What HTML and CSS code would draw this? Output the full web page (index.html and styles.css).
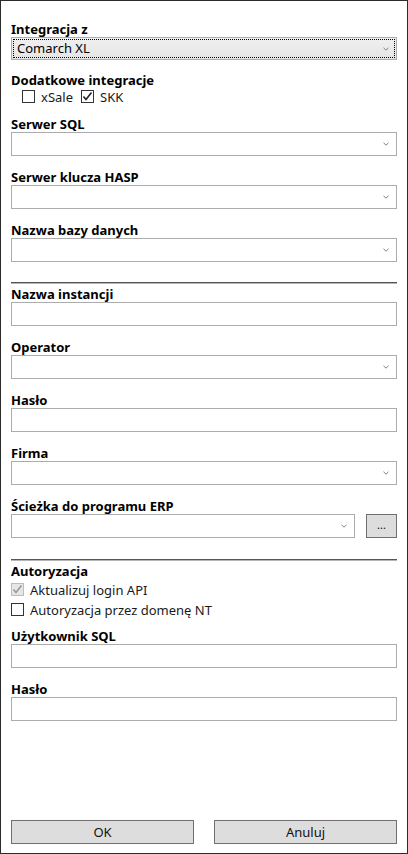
FILE: index.html
```html
<!DOCTYPE html>
<html lang="pl">
<head>
  <meta charset="UTF-8" />
  <meta name="viewport" content="width=device-width, initial-scale=1.0"/>
  <title>Integracja ERP</title>
  <link rel="stylesheet" href="styles.css">
</head>
<body>
  <div class="okno">
    <div class="pole pierwsze">
      <div class="etykieta">Integracja z</div>
      <div class="combo aktywne">
        <span class="wartosc">Comarch XL</span>
        <svg class="strzalka" width="6" height="4" viewBox="0 0 6 4"><polyline points="0.5,0.8 3,3.2 5.5,0.8" fill="none" stroke="#808080" stroke-width="1"/></svg>
      </div>
    </div>

    <div class="pole dodatkowe">
      <div class="etykieta">Dodatkowe integracje</div>
      <div class="wiersz-check wciety">
        <span class="check"></span><span class="opis">xSale</span>
        <span class="check zaznaczony">
          <svg width="11" height="11" viewBox="0 0 11 11"><polyline points="1.5,5.5 4,8.5 9.5,1.5" fill="none" stroke="#222" stroke-width="1.6"/></svg>
        </span><span class="opis">SKK</span>
      </div>
    </div>

    <div class="pole">
      <div class="etykieta">Serwer SQL</div>
      <div class="combo">
        <svg class="strzalka" width="6" height="4" viewBox="0 0 6 4"><polyline points="0.5,0.8 3,3.2 5.5,0.8" fill="none" stroke="#808080" stroke-width="1"/></svg>
      </div>
    </div>

    <div class="pole">
      <div class="etykieta">Serwer klucza HASP</div>
      <div class="combo">
        <svg class="strzalka" width="6" height="4" viewBox="0 0 6 4"><polyline points="0.5,0.8 3,3.2 5.5,0.8" fill="none" stroke="#808080" stroke-width="1"/></svg>
      </div>
    </div>

    <div class="pole">
      <div class="etykieta">Nazwa bazy danych</div>
      <div class="combo">
        <svg class="strzalka" width="6" height="4" viewBox="0 0 6 4"><polyline points="0.5,0.8 3,3.2 5.5,0.8" fill="none" stroke="#808080" stroke-width="1"/></svg>
      </div>
    </div>

    <div class="separator"></div>

    <div class="pole po-separatorze">
      <div class="etykieta">Nazwa instancji</div>
      <div class="tekst"></div>
    </div>

    <div class="pole">
      <div class="etykieta">Operator</div>
      <div class="combo">
        <svg class="strzalka" width="6" height="4" viewBox="0 0 6 4"><polyline points="0.5,0.8 3,3.2 5.5,0.8" fill="none" stroke="#808080" stroke-width="1"/></svg>
      </div>
    </div>

    <div class="pole">
      <div class="etykieta">Hasło</div>
      <div class="tekst"></div>
    </div>

    <div class="pole">
      <div class="etykieta">Firma</div>
      <div class="combo">
        <svg class="strzalka" width="6" height="4" viewBox="0 0 6 4"><polyline points="0.5,0.8 3,3.2 5.5,0.8" fill="none" stroke="#808080" stroke-width="1"/></svg>
      </div>
    </div>

    <div class="pole">
      <div class="etykieta">Ścieżka do programu ERP</div>
      <div class="sciezka">
        <div class="combo">
          <svg class="strzalka" width="6" height="4" viewBox="0 0 6 4"><polyline points="0.5,0.8 3,3.2 5.5,0.8" fill="none" stroke="#808080" stroke-width="1"/></svg>
        </div>
        <div class="przycisk maly">...</div>
      </div>
    </div>

    <div class="separator drugi"></div>

    <div class="pole po-separatorze">
      <div class="etykieta">Autoryzacja</div>
      <div class="wiersz-check auth">
        <span class="check zaznaczony wylaczony">
          <svg width="11" height="11" viewBox="0 0 11 11"><polyline points="1.5,5.5 4,8.5 9.5,1.5" fill="none" stroke="#9a9a9a" stroke-width="1.6"/></svg>
        </span><span class="opis">Aktualizuj login API</span>
      </div>
      <div class="wiersz-check auth">
        <span class="check"></span><span class="opis">Autoryzacja przez domenę NT</span>
      </div>
    </div>

    <div class="pole uzytkownik">
      <div class="etykieta">Użytkownik SQL</div>
      <div class="tekst"></div>
    </div>

    <div class="pole">
      <div class="etykieta">Hasło</div>
      <div class="tekst"></div>
    </div>

    <div class="stopka">
      <div class="przycisk">OK</div>
      <div class="przycisk">Anuluj</div>
    </div>
  </div>
</body>
</html>
```

FILE: styles.css
```css
* {
  box-sizing: border-box;
}

body {
  margin: 0;
  font-family: 'Noto Sans', 'Open Sans', sans-serif;
  font-size: 13px;
  color: #000;
  background: #fff;
}

.okno {
  width: 408px;
  height: 854px;
  border: 1px solid #2b2b2b;
  padding: 20px 10px 9px 10px;
  display: flex;
  flex-direction: column;
  background: #fff;
}

.pole {
  margin-top: 13px;
}

.pole.pierwsze {
  margin-top: 0;
}

.pole.dodatkowe {
  margin-top: 12px;
}

.pole.dodatkowe + .pole {
  margin-top: 12px;
}

.pole.po-separatorze {
  margin-top: 2px;
}

.pole.uzytkownik {
  margin-top: 10px;
}

.etykieta {
  font-weight: bold;
  font-size: 13px;
  line-height: 16px;
  height: 16px;
  white-space: nowrap;
}

/* pola wyboru i tekstowe */
.combo,
.tekst {
  height: 24px;
  border: 1px solid #acacac;
  background: #fff;
  display: flex;
  align-items: center;
}

.combo .strzalka {
  margin-left: auto;
  margin-right: 7px;
}

.combo.aktywne {
  height: 23px;
  background: linear-gradient(#f0f0f0, #e5e5e5);
  outline: 1px dotted #000;
  outline-offset: -3px;
}

.combo .wartosc {
  padding-left: 5px;
  font-size: 13px;
  line-height: 17px;
}

.sciezka {
  display: flex;
  gap: 11px;
}

.sciezka .combo {
  flex: 1;
}

/* checkboxy */
.wiersz-check {
  display: flex;
  align-items: center;
  height: 16px;
}

.wiersz-check.wciety {
  padding-left: 11px;
  height: 15px;
  margin-top: 1px;
}

.wiersz-check.auth {
  height: 17px;
  margin-top: 2px;
}

.wiersz-check.auth + .wiersz-check.auth {
  margin-top: 3px;
}

.check {
  width: 13px;
  height: 13px;
  border: 1px solid #333;
  background: #fff;
  display: flex;
  align-items: center;
  justify-content: center;
  flex: none;
}

.check.wylaczony {
  border-color: #bcbcbc;
  background: #e6e6e6;
}

.opis {
  margin-left: 6px;
  margin-right: 8px;
  font-size: 13px;
  line-height: 14px;
  color: #1a1a1a;
}

.separator {
  margin-top: 20px;
  height: 2px;
  border-top: 1px solid #555;
  border-bottom: 1px solid #b5b5b5;
}

.separator.drugi {
  margin-top: 21px;
}

/* przyciski */
.przycisk {
  height: 24px;
  border: 1px solid #707070;
  background: #dddddd;
  display: flex;
  align-items: center;
  justify-content: center;
  font-size: 13px;
  color: #111;
}

.przycisk.maly {
  width: 31px;
  font-size: 11px;
  align-items: flex-end;
  padding-bottom: 5px;
}

.stopka {
  margin-top: auto;
  display: grid;
  grid-template-columns: 1fr 1fr;
  gap: 20px;
}
```
